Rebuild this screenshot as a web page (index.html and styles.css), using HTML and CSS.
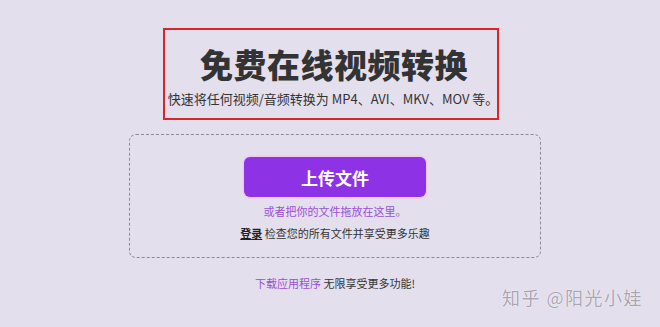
FILE: index.html
```html
<!DOCTYPE html>
<html lang="zh-CN">
<head>
<meta charset="utf-8">
<link rel="stylesheet" href="styles.css">
</head>
<body>
<div class="page">
  <div class="hero">
    <h1 class="title">免费在线视频转换</h1>
    <p class="subtitle">快速将任何视频/音频转换为 MP4、AVI、MKV、MOV 等。</p>
  </div>
  <div class="drop">
    <button class="upload">上传文件</button>
    <p class="hint">或者把你的文件拖放在这里。</p>
    <p class="login"><a class="login-link">登录</a> 检查您的所有文件并享受更多乐趣</p>
  </div>
  <p class="app"><a class="app-link">下载应用程序</a> 无限享受更多功能!</p>
</div>
<div class="watermark">知乎 @阳光小娃</div>
</body>
</html>
```
FILE: styles.css
```css
html, body {
  margin: 0;
  padding: 0;
}
body {
  width: 660px;
  height: 327px;
  background: #e4dfed;
  font-family: "Noto Sans CJK SC", "Noto Sans", sans-serif;
  color: #333;
  overflow: hidden;
  position: relative;
}
.page {
  display: flex;
  flex-direction: column;
  align-items: center;
  padding-top: 28px;
  padding-left: 10px;
}
.hero {
  width: 332px;
  height: 88px;
  border: 2px solid #d8262b;
  display: flex;
  flex-direction: column;
  align-items: center;
  margin-left: -8px;
}
.title {
  margin: 14px 0 0 6px;
  font-size: 33px;
  line-height: 40px;
  font-weight: 900;
  color: #333;
  letter-spacing: 0.5px;
}
.subtitle {
  margin: 5px 0 0 4px;
  font-size: 13px;
  line-height: 20px;
  color: #333;
  white-space: nowrap;
}
.drop {
  margin-top: 14px;
  width: 410px;
  height: 122px;
  border: 1px dashed #8d8a94;
  border-radius: 7px;
  display: flex;
  flex-direction: column;
  align-items: center;
}
.upload {
  margin-top: 22px;
  width: 182px;
  height: 40px;
  border: none;
  border-radius: 6px;
  background: #8d32e5;
  box-shadow: 0 0 0 1.5px #efc8f3;
  color: #fff;
  font-family: inherit;
  font-size: 17px;
  font-weight: 700;
}
.hint {
  margin: 6px 0 0;
  font-size: 11px;
  line-height: 16px;
  color: #9a4fd2;
}
.login {
  margin: 6px 0 0;
  font-size: 11px;
  line-height: 16px;
  color: #333;
}
.login-link {
  color: #222;
  text-decoration: underline;
  font-weight: 700;
}
.app {
  margin: 17px 0 0;
  font-size: 11px;
  line-height: 16px;
  color: #333;
}
.app-link {
  color: #9a4fd2;
}
.watermark {
  position: absolute;
  right: 17px;
  top: 285px;
  font-size: 18px;
  line-height: 24px;
  letter-spacing: 1.5px;
  color: #a9a5b1;
  text-shadow: 0 0 1px #fff, 0 0 1px #fff;
}
```
